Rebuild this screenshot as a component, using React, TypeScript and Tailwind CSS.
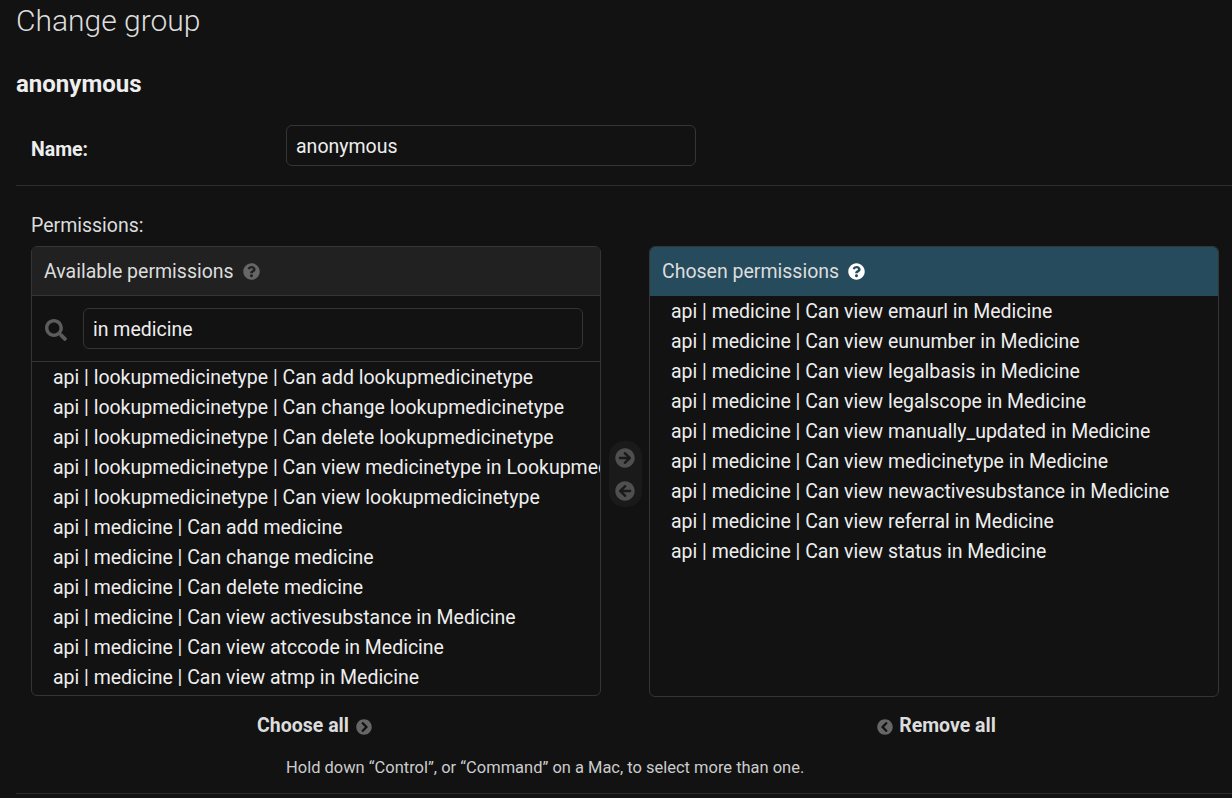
import React from "react";
import { FaQuestionCircle, FaSearch, FaArrowCircleRight, FaArrowCircleLeft, FaChevronCircleRight, FaChevronCircleLeft } from "react-icons/fa";

const available = [
  "api | lookupmedicinetype | Can add lookupmedicinetype",
  "api | lookupmedicinetype | Can change lookupmedicinetype",
  "api | lookupmedicinetype | Can delete lookupmedicinetype",
  "api | lookupmedicinetype | Can view medicinetype in Lookupmedicinetype",
  "api | lookupmedicinetype | Can view lookupmedicinetype",
  "api | medicine | Can add medicine",
  "api | medicine | Can change medicine",
  "api | medicine | Can delete medicine",
  "api | medicine | Can view activesubstance in Medicine",
  "api | medicine | Can view atccode in Medicine",
  "api | medicine | Can view atmp in Medicine",
];
const chosen = [
  "api | medicine | Can view emaurl in Medicine",
  "api | medicine | Can view eunumber in Medicine",
  "api | medicine | Can view legalbasis in Medicine",
  "api | medicine | Can view legalscope in Medicine",
  "api | medicine | Can view manually_updated in Medicine",
  "api | medicine | Can view medicinetype in Medicine",
  "api | medicine | Can view newactivesubstance in Medicine",
  "api | medicine | Can view referral in Medicine",
  "api | medicine | Can view status in Medicine",
];

function Rows({ items }: { items: string[] }) {
  return (
    <div className="overflow-hidden pt-px text-[19.485px]">
      {items.map((t) => (
        <div key={t} className="h-[30px] leading-[30px] pl-[21px] whitespace-nowrap">{t}</div>
      ))}
    </div>
  );
}

export default function App() {
  return (
    <div className="h-[798px] w-[1232px] overflow-hidden bg-[#121212] text-[#eeeeee] font-['Roboto',sans-serif] text-[19.5px]">
      <div className="pl-4">
        <h1 className="h-[42px] pt-[2px] text-[30px] leading-[38px] font-light text-[#dddddd]">Change group</h1>
        <h2 className="mt-[25px] h-[34px] text-[24px] leading-[34px] font-bold">anonymous</h2>

        <div className="mt-[24px] h-[61px] border-b border-[#2c2c2c] pl-[15px] flex items-start">
          <label className="w-[255px] pt-[11px] font-bold text-[19.5px] leading-[28px]">Name:</label>
          <input
            readOnly
            value="anonymous"
            className="w-[410px] h-[41px] px-[9px] border border-[#353535] rounded-[6px] bg-[#121212] text-[19.5px] text-[#eeeeee] outline-none pt-[1px]"
          />
        </div>

        <div className="pl-[15px] pt-[26px]">
          <div className="h-[34px] leading-[28px] text-[19.5px] text-[#dddddd]">Permissions:</div>
          <div className="flex">
            <div className="w-[570px]">
              <div className="h-[450px] border border-[#353535] rounded-[6px] overflow-hidden">
                <div className="h-[49px] bg-[#212121] border-b border-[#353535] pl-3 pt-[2px] flex items-center gap-[9px] text-[#dddddd]">
                  <span>Available permissions</span>
                  <FaQuestionCircle className="text-[#666666] w-[17px] h-[17px] -mt-[2px]" />
                </div>
                <div className="h-[66px] border-b border-[#353535] flex items-center pl-[13px]">
                  <FaSearch className="text-[#5c5c5c] w-[22px] h-[22px] mt-[3px]" />
                  <input
                    readOnly
                    value="in medicine"
                    className="ml-[16px] w-[500px] h-[41px] px-[9px] pt-[2px] border border-[#353535] rounded-[6px] bg-[#121212] text-[19.5px] text-[#eeeeee] outline-none"
                  />
                </div>
                <Rows items={available} />
              </div>
              <div className="mt-[15px] h-[30px] flex items-center justify-center gap-[7px] font-bold text-[#dddddd] pr-[3px]">
                <span>Choose all</span>
                <FaChevronCircleRight className="text-[#666666] w-[16px] h-[16px] mt-[1px]" />
              </div>
            </div>

            <div className="w-[48px] flex justify-center pt-[195px]">
              <div className="w-[33px] h-[66px] rounded-[15px] bg-[#1a1a1a] flex flex-col items-center pt-[7px] gap-[13px]">
                <FaArrowCircleRight className="text-[#4f4f4f] w-[20px] h-[20px]" />
                <FaArrowCircleLeft className="text-[#4f4f4f] w-[20px] h-[20px]" />
              </div>
            </div>

            <div className="w-[570px]">
              <div className="h-[451px] border border-[#353535] rounded-[6px] overflow-hidden">
                <div className="h-[49px] bg-[#264b5d] pl-3 pt-[1px] flex items-center gap-[9px] text-[#dddddd]">
                  <span>Chosen permissions</span>
                  <FaQuestionCircle className="text-white w-[17px] h-[17px] -mt-[1px]" />
                </div>
                <Rows items={chosen} />
              </div>
              <div className="mt-[14px] h-[30px] flex items-center justify-center gap-[6px] font-bold text-[#dddddd] pl-[5px]">
                <FaChevronCircleLeft className="text-[#666666] w-[16px] h-[16px] mt-[1px]" />
                <span>Remove all</span>
              </div>
            </div>
          </div>
          <div className="pl-[255px] mt-[15px] text-[16.48px] leading-[24px] text-[#cccccc]">
            Hold down “Control”, or “Command” on a Mac, to select more than one.
          </div>
        </div>
        <div className="mt-[13px] border-b border-[#2c2c2c]" />
      </div>
    </div>
  );
}
